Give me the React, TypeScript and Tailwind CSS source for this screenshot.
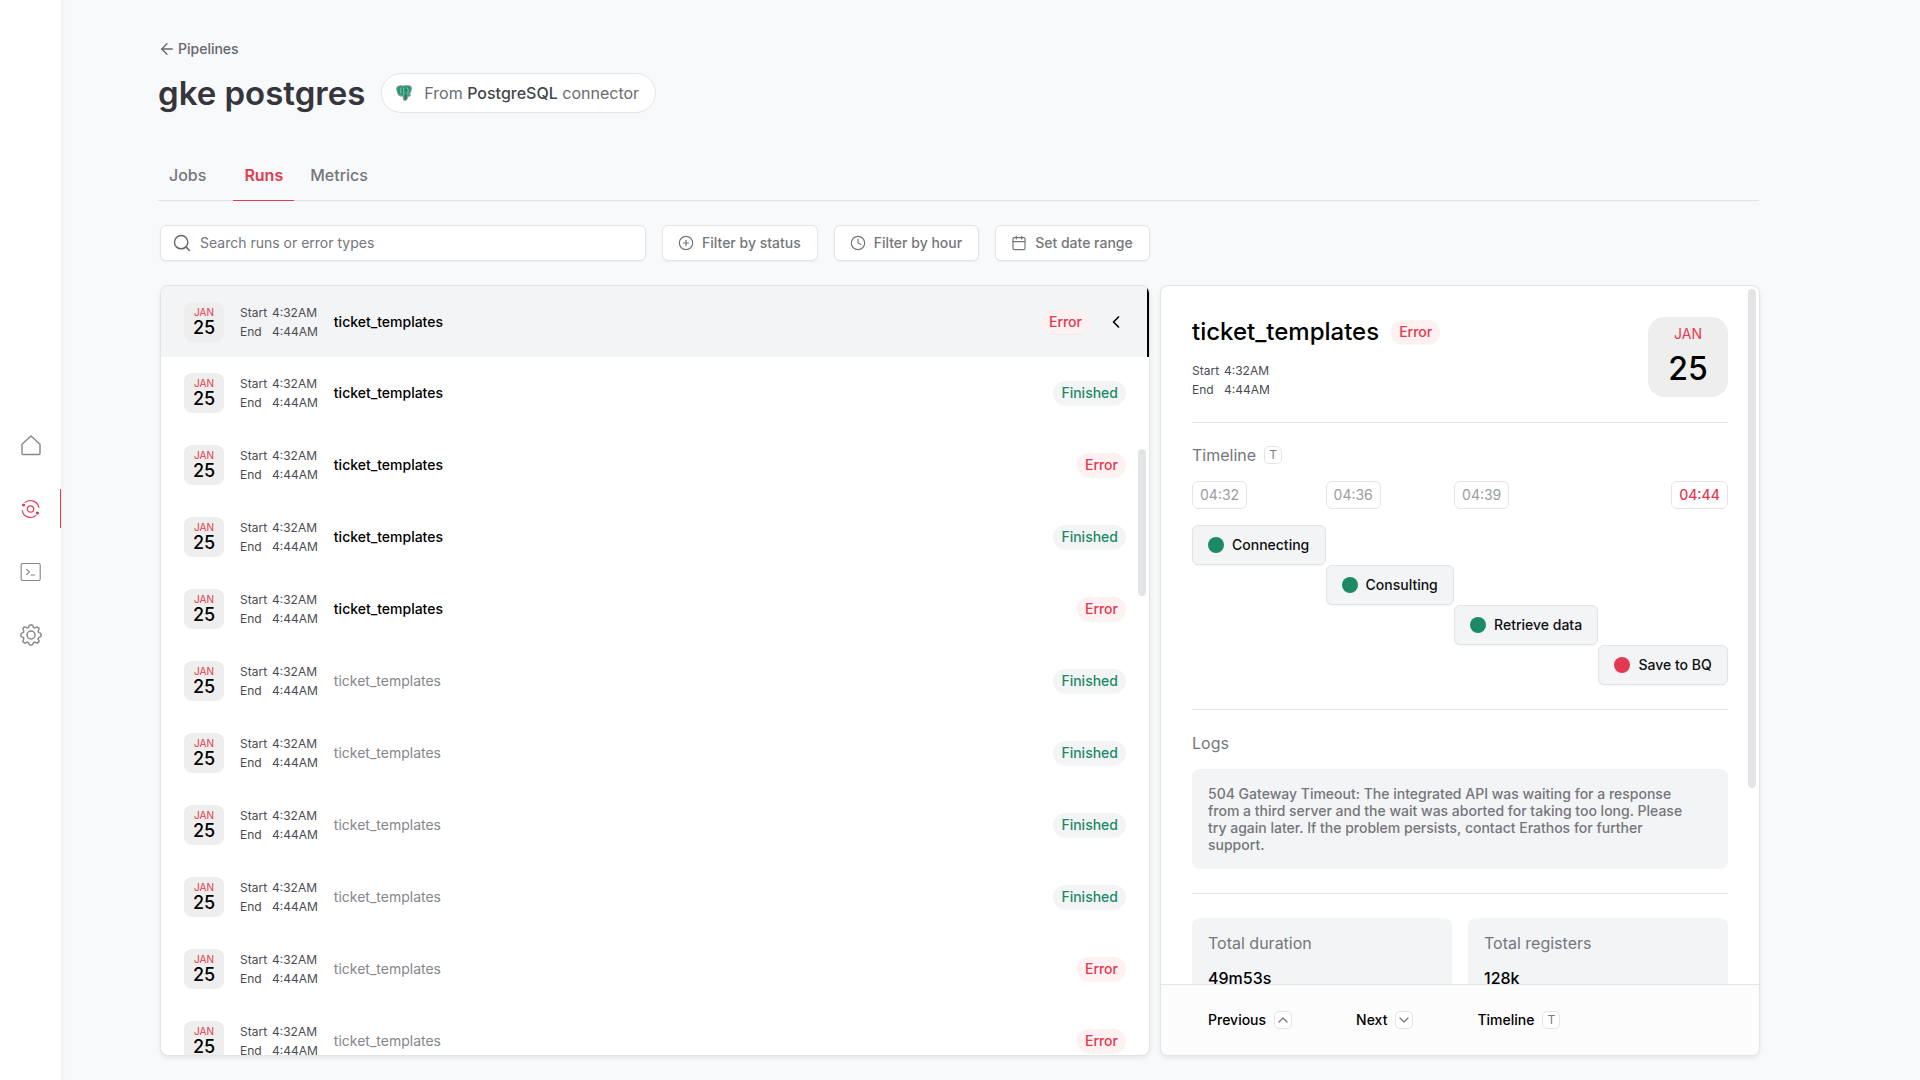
import type { ReactNode } from "react";
import { ArrowLeft, Calendar, ChevronDown, ChevronLeft, ChevronUp, CirclePlus, Clock, Search } from "lucide-react";

type Status = "Error" | "Finished";

const runs: { status: Status; read: boolean }[] = [
  { status: "Error", read: false },
  { status: "Finished", read: false },
  { status: "Error", read: false },
  { status: "Finished", read: false },
  { status: "Error", read: false },
  { status: "Finished", read: true },
  { status: "Finished", read: true },
  { status: "Finished", read: true },
  { status: "Finished", read: true },
  { status: "Error", read: true },
  { status: "Error", read: true },
];

function StatusBadge({ status }: { status: Status }) {
  const tone = status === "Error" ? "bg-[#fff0f1] text-[#e23a50]" : "bg-[#f3f4f6] text-[#1c8a65]";
  return <span className={`rounded-full px-2 text-sm leading-6 font-medium shadow-[0_1px_1px_rgba(0,0,0,0.03)] ${tone}`}>{status}</span>;
}

function Times() {
  return (
    <dl className="grid grid-cols-[32px_auto] text-xs leading-[19px] text-[#4b4c51]">
      <dt>Start</dt>
      <dd>4:32AM</dd>
      <dt>End</dt>
      <dd>4:44AM</dd>
    </dl>
  );
}

function Key({ children }: { children: ReactNode }) {
  return (
    <kbd className="flex size-[18px] items-center justify-center rounded-[5px] border border-[#e3e4e6] bg-white font-['Inter',sans-serif] text-xs leading-none font-normal text-[#7b7c82]">
      {children}
    </kbd>
  );
}

function HomeIcon() {
  return (
    <svg viewBox="0 0 24 24" className="size-6" fill="none" stroke="currentColor" strokeWidth="1.4" strokeLinejoin="round">
      <path d="M3 10.2 12 1.9l9 8.3v9.3a1 1 0 0 1-1 1H4a1 1 0 0 1-1-1z" />
    </svg>
  );
}

function PipelineIcon() {
  return (
    <svg viewBox="0 0 24 24" className="size-6" fill="none" stroke="currentColor" strokeWidth="1.2" strokeLinecap="round">
      <circle cx="11.5" cy="12" r="3.2" />
      <path d="M6.2 5.4A8.5 8.5 0 0 1 19.8 10.4" />
      <path d="M16.8 18.6A8.5 8.5 0 0 1 3.2 13.6" />
      <circle cx="4.6" cy="8" r="1" fill="currentColor" />
      <circle cx="18.4" cy="16" r="1" fill="currentColor" />
    </svg>
  );
}

function TerminalIcon() {
  return (
    <svg viewBox="0 0 24 24" className="size-6" fill="none" stroke="currentColor" strokeWidth="1.1" strokeLinecap="round" strokeLinejoin="round">
      <rect x="2.2" y="3.5" width="19" height="17" rx="1.5" />
      <path d="m7.5 9.3 3 2.7-3 2.7M12 15h3.6" />
    </svg>
  );
}

function GearIcon() {
  return (
    <svg viewBox="0 0 24 24" className="size-6" fill="none" stroke="currentColor" strokeWidth="1.5" strokeLinejoin="round">
      <circle cx="12" cy="12" r="4" />
      <path d="M9.6 4.2Q10.200 2 10.800 2h2.400Q13.800 2 14.400 4.200q.8.9 1.800.5 2-1.100 2.400-.7l1.400 1.400q.4.4-.7 2.400-.4 1 .5 1.800 2.200.6 2.200 1.200v2.400q0 .6-2.200 1.200-.9.8-.5 1.800 1.100 2 .7 2.400l-1.400 1.400q-.4.4-2.400-.7-1-.4-1.800.5Q13.800 22 13.200 22h-2.400q-.6 0-1.200-2.200-.8-.9-1.800-.5-2 1.100-2.400.7L4 18.600q-.4-.4.7-2.400.4-1-.5-1.800Q2 13.800 2 13.200v-2.400q0-.6 2.200-1.200.9-.8.5-1.800-1.100-2-.7-2.400L5.400 4q.4-.4 2.400.7 1 .4 1.800-.5z" />
    </svg>
  );
}

function PostgresIcon() {
  return (
    <svg viewBox="0 0 16 16" className="size-4" aria-hidden="true">
      <path d="M3.2 1C5 .4 6 .8 7 1.2 8.3.6 9.7.6 11 .8c2-.4 4.6.2 4.3 3-.2 2.2-1.3 4.4-2.3 5.8.8.2 1.7.2 1.5.7-.6.9-2.1 1-2.9.7-.2 1.6-.1 3.8-1.8 4.3-1.8.4-2.3-.6-2.4-2.2L7.3 10.5c-.7.5-1.9.6-2.6.2C3 11.5 1.5 8 .9 5 .4 2.5 1.400 1.400 3.200 1z" fill="#1c9c73" stroke="#8b8f96" strokeWidth="1.1" />
      <path d="M5.2 2.5C4.5 4 4.6 6.5 5 8.700M7.700 3c-.8 2.400.7 3.900 0 6.900M11 2.500c1.800 1.800 1.200 4.200.6 6.800" fill="none" stroke="#a9b9b8" strokeWidth="1" />
      <path d="M8.9 9.5c1 .4.9 2 .8 4.300M6.300 4.500v1.200M10 4.500v1.200" fill="none" stroke="#365c55" strokeWidth="0.9" />
    </svg>
  );
}

const navigation = [
  { label: "Home", icon: <HomeIcon />, active: false },
  { label: "Pipelines", icon: <PipelineIcon />, active: true },
  { label: "Console", icon: <TerminalIcon />, active: false },
  { label: "Settings", icon: <GearIcon />, active: false },
];

function Sidebar() {
  return (
    <nav aria-label="Main" className="flex w-[61px] shrink-0 flex-col justify-center gap-6 bg-white shadow-[1px_0_4px_rgba(0,0,0,0.06)]">
      {navigation.map((item) => (
        <a
          key={item.label}
          href="#"
          aria-label={item.label}
          className={`flex h-[39px] items-center justify-center border-r pl-0.5 ${item.active ? "border-[#e23a50] text-[#e23a50]" : "border-transparent text-[#85878c]"}`}
        >
          {item.icon}
        </a>
      ))}
    </nav>
  );
}

function Header() {
  return (
    <header className="px-[97px]">
      <a href="#" className="flex w-fit items-center gap-0.5 text-sm leading-5 font-medium text-[#65666b]">
        <ArrowLeft className="size-[18px]" strokeWidth={1.75} />
        Pipelines
      </a>
      <div className="mt-3.5 flex items-center gap-4">
        <h1 className="text-[33px] leading-10 font-semibold text-[#35353b]">gke postgres</h1>
        <div className="flex h-10 items-center gap-3 rounded-full border border-[#e3e4e6] bg-white pr-4 pl-3.5 text-base text-[#6b6c71]">
          <PostgresIcon />
          <p>
            From <span className="font-medium text-[#45464b]">PostgreSQL</span> connector
          </p>
        </div>
      </div>
    </header>
  );
}

function Tabs() {
  return (
    <div role="tablist" className="mx-[97px] mt-[37px] flex border-b border-[#e1e2e4] text-base font-medium text-[#75767b]">
      <button role="tab" className="mr-4 h-[50px] px-[11px]">
        Jobs
      </button>
      <button role="tab" aria-selected="true" className="-mb-px h-[51px] border-b border-[#e23a50] px-[11px] font-semibold text-[#e23a50]">
        Runs
      </button>
      <button role="tab" className="h-[50px] px-4">
        Metrics
      </button>
    </div>
  );
}

function FilterButton({ icon, children }: { icon: ReactNode; children: ReactNode }) {
  return (
    <button className="flex h-9 items-center gap-2 rounded-md border border-[#e3e4e6] bg-white pr-4 pl-[15px] text-sm font-medium text-[#75767b] shadow-[0_1px_2px_rgba(0,0,0,0.05)]">
      {icon}
      {children}
    </button>
  );
}

function Toolbar() {
  return (
    <div className="mt-6 flex gap-4">
      <label className="flex h-9 w-[486px] items-center gap-2 rounded-md border border-[#e3e4e6] bg-white px-[11px] shadow-[0_1px_2px_rgba(0,0,0,0.05)]">
        <Search className="size-5 text-[#66676c]" strokeWidth={1.75} />
        <input aria-label="Search runs" placeholder="Search runs or error types" className="min-w-0 flex-1 text-sm outline-none placeholder:text-[#75767b]" />
      </label>
      <FilterButton icon={<CirclePlus className="size-4" strokeWidth={1.75} />}>Filter by status</FilterButton>
      <FilterButton icon={<Clock className="size-4" strokeWidth={1.75} />}>Filter by hour</FilterButton>
      <FilterButton icon={<Calendar className="size-4" strokeWidth={1.75} />}>Set date range</FilterButton>
    </div>
  );
}

function RunRow({ status, read, selected }: { status: Status; read: boolean; selected: boolean }) {
  return (
    <li>
      <button className={`flex w-full items-center pl-[23px] text-left ${selected ? "h-[71px] border-r-2 border-black bg-[#f3f4f6] pr-[21px]" : "h-[72px] pr-[23px]"}`}>
        <span className="mr-4 flex size-10 flex-col items-center rounded-lg bg-[#eeeeee] pt-1">
          <span className="text-[10px] leading-3 text-[#e23a50]">JAN</span>
          <span className="text-lg leading-5 font-medium text-black">25</span>
        </span>
        <Times />
        <span className={`ml-4 flex-1 text-sm ${read ? "text-[#85868b]" : "font-medium text-black"}`}>ticket_templates</span>
        <StatusBadge status={status} />
        {selected && <ChevronLeft className="ml-4 size-5 text-black" strokeWidth={2} />}
      </button>
    </li>
  );
}

function RunList() {
  return (
    <section aria-label="Runs" className="relative min-w-0 flex-1 overflow-hidden rounded-lg border border-[#e3e4e6] bg-white shadow-[0_2px_4px_rgba(0,0,0,0.08)]">
      <ul>
        {runs.map((run, index) => (
          <RunRow key={index} status={run.status} read={run.read} selected={index === 0} />
        ))}
      </ul>
      <div className="absolute top-[163px] right-[3px] h-[147px] w-2 rounded-full bg-[#e3e4e6]" />
    </section>
  );
}

function TimeChip({ children, failed }: { children: string; failed?: boolean }) {
  return (
    <time className={`rounded-md border border-[#e3e4e6] px-[7px] text-sm leading-[26px] ${failed ? "justify-self-end font-medium text-[#e23a50]" : "justify-self-start text-[#9b9ca1]"}`}>
      {children}
    </time>
  );
}

function Step({ children, failed }: { children: string; failed?: boolean }) {
  return (
    <div className="flex h-10 items-center gap-2 rounded-md border border-[#e3e4e6] bg-[#f3f4f6] px-[15px] text-sm font-medium whitespace-nowrap text-[#0e0e10] shadow-[0_1px_2px_rgba(0,0,0,0.05)]">
      <span className={`size-4 rounded-full ${failed ? "bg-[#e23a50]" : "bg-[#1c8a65]"}`} />
      {children}
    </div>
  );
}

function Timeline() {
  return (
    <div className="mt-3.5 grid grid-cols-[auto_auto_auto_auto]">
      <TimeChip>04:32</TimeChip>
      <TimeChip>04:36</TimeChip>
      <TimeChip>04:39</TimeChip>
      <TimeChip failed>04:44</TimeChip>
      <div className="col-start-1 row-start-2 mt-4">
        <Step>Connecting</Step>
      </div>
      <div className="col-start-2 row-start-3">
        <Step>Consulting</Step>
      </div>
      <div className="col-start-3 row-start-4">
        <Step>Retrieve data</Step>
      </div>
      <div className="col-start-4 row-start-5">
        <Step failed>Save to BQ</Step>
      </div>
    </div>
  );
}

function Metric({ label, value }: { label: string; value: string }) {
  return (
    <div className="h-24 rounded-lg bg-[#f3f4f6] px-4 pt-[13px]">
      <h3 className="text-base leading-6 text-[#75767b]">{label}</h3>
      <p className="mt-[11px] text-base leading-6 font-medium text-black">{value}</p>
    </div>
  );
}

function RunDetails() {
  return (
    <aside aria-label="Run details" className="relative flex w-[600px] shrink-0 flex-col overflow-hidden rounded-lg border border-[#e3e4e6] bg-white shadow-[0_2px_4px_rgba(0,0,0,0.08)]">
      <div className="min-h-0 flex-1 overflow-hidden px-[31px] pt-[31px]">
        <div className="flex justify-between border-b border-[#e3e4e6] pb-[23px]">
          <div>
            <div className="mb-[15px] flex items-center gap-3 pt-px">
              <h2 className="text-2xl leading-7 font-medium text-black">ticket_templates</h2>
              <StatusBadge status="Error" />
            </div>
            <Times />
          </div>
          <div className="flex size-20 flex-col items-center rounded-2xl bg-[#eeeeee] pt-2">
            <span className="text-sm leading-[18px] text-[#e23a50]">JAN</span>
            <span className="mt-2 text-[32px] leading-9 font-medium text-black">25</span>
          </div>
        </div>
        <section className="border-b border-[#e3e4e6] pt-5 pb-6">
          <h3 className="flex items-center gap-2 text-base leading-6 text-[#75767b]">
            Timeline <Key>T</Key>
          </h3>
          <Timeline />
        </section>
        <section className="border-b border-[#e3e4e6] pt-[21px] pb-6">
          <h3 className="text-base leading-6 text-[#75767b]">Logs</h3>
          <p className="mt-3.5 rounded-lg bg-[#f3f4f6] py-4 pr-8 pl-4 text-sm leading-[17px] font-medium text-[#75767b]">
            504 Gateway Timeout: The integrated API was waiting for a response from a third server and the wait was aborted for taking too long. Please try again later. If the problem persists, contact Erathos for further support.
          </p>
        </section>
        <section className="grid grid-cols-2 gap-4 pt-6">
          <Metric label="Total duration" value="49m53s" />
          <Metric label="Total registers" value="128k" />
        </section>
      </div>
      <div className="absolute top-[3px] right-[3px] h-[499px] w-2 rounded-full bg-[#e3e4e6]" />
      <footer className="flex h-[71px] shrink-0 items-center gap-16 border-t border-[#e3e4e6] bg-[#fcfcfc] px-[47px] text-sm font-medium text-black">
        <button className="flex items-center gap-2">
          Previous
          <Key>
            <ChevronUp className="size-4 shrink-0" strokeWidth={2} />
          </Key>
        </button>
        <button className="flex items-center gap-2">
          Next
          <Key>
            <ChevronDown className="size-4 shrink-0" strokeWidth={2} />
          </Key>
        </button>
        <button className="flex items-center gap-2">
          Timeline
          <Key>T</Key>
        </button>
      </footer>
    </aside>
  );
}

export default function App() {
  return (
    <div className="flex h-screen bg-[#f8f9fb] font-['Inter',sans-serif]">
      <Sidebar />
      <main className="flex min-w-0 flex-1 flex-col pt-[39px] pr-16">
        <Header />
        <Tabs />
        <div className="mr-24 mb-6 ml-[99px] flex min-h-0 flex-1 flex-col">
          <Toolbar />
          <div className="mt-6 flex min-h-0 flex-1 gap-2.5">
            <RunList />
            <RunDetails />
          </div>
        </div>
      </main>
    </div>
  );
}
